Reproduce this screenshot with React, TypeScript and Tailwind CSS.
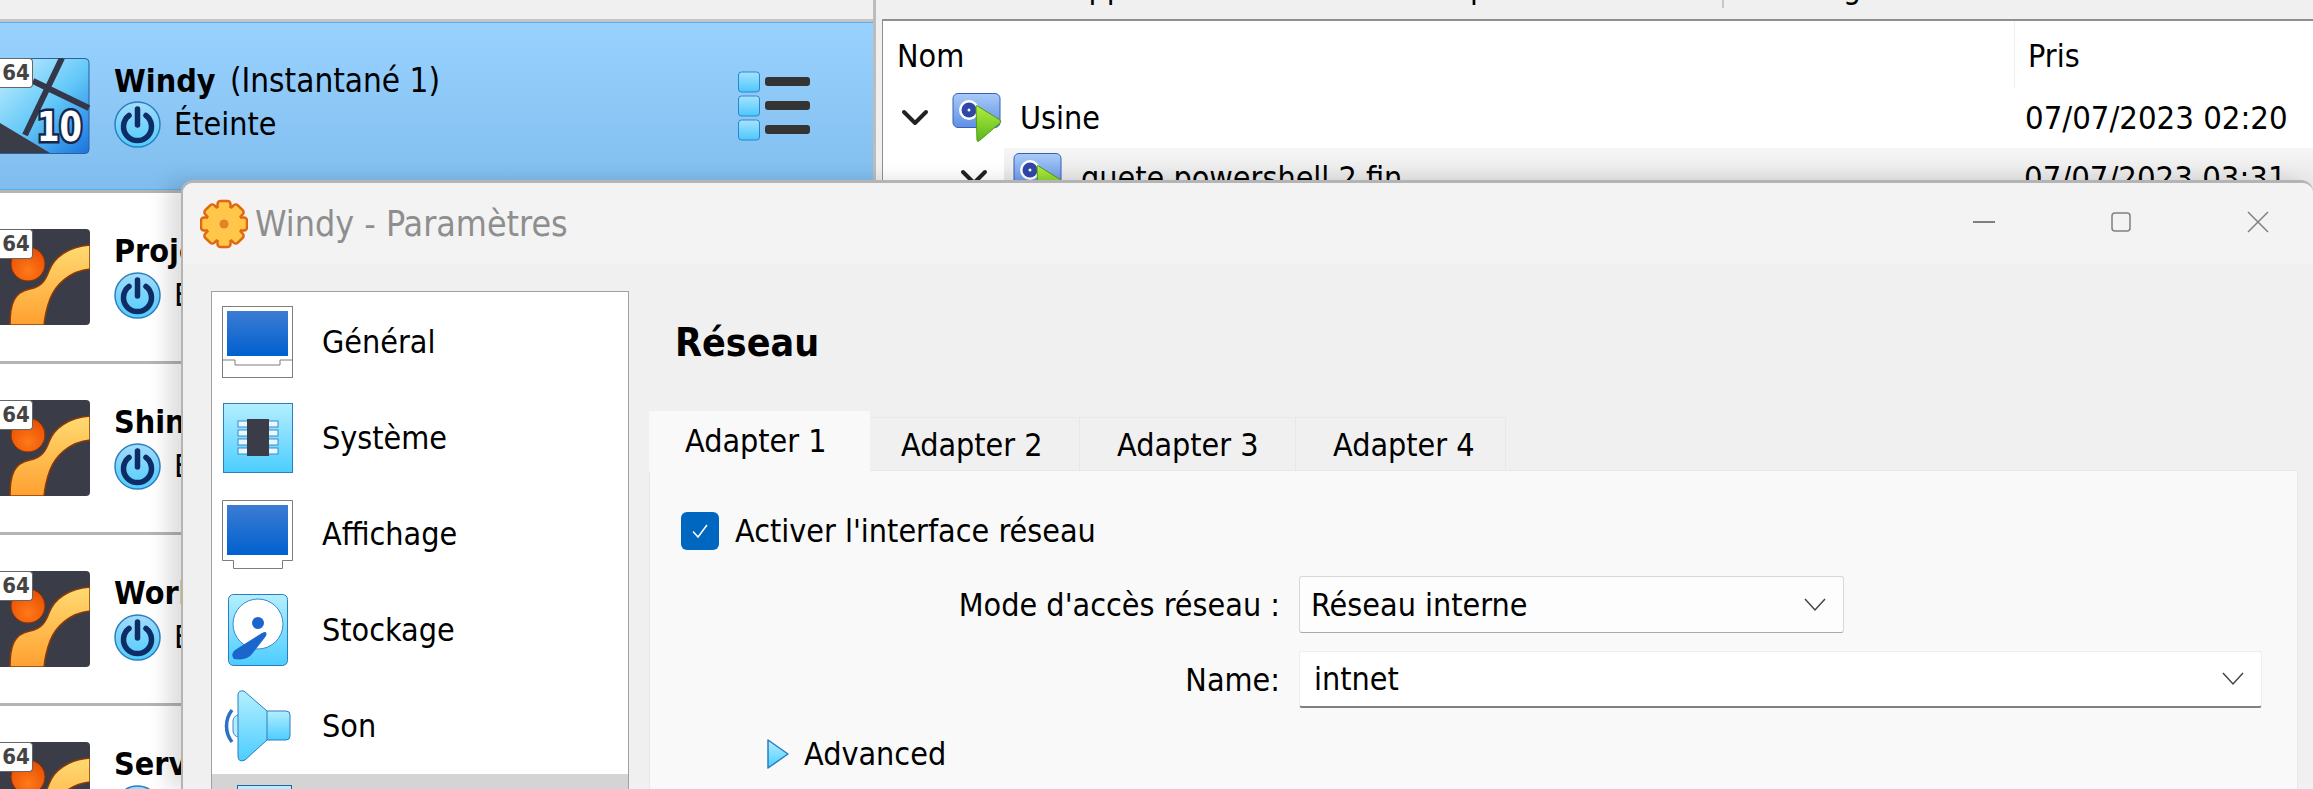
import type { ReactNode } from 'react';

function PowerIcon() {
  return (
    <svg width="47" height="47" viewBox="0 0 47 47" className="shrink-0">
      <defs>
        <linearGradient id="pw" x1="0" y1="0" x2="0" y2="1">
          <stop offset="0" stopColor="#a4dcfa" />
          <stop offset="1" stopColor="#4ecdfd" />
        </linearGradient>
      </defs>
      <circle cx="23.5" cy="23.5" r="22.5" fill="url(#pw)" stroke="#2c7fc0" strokeWidth="1.5" />
      <path d="M15 14.5a14 14 0 1 0 17 0" fill="none" stroke="#0e2d66" strokeWidth="5.5" strokeLinecap="round" />
      <path d="M23.5 8v16" fill="none" stroke="#0e2d66" strokeWidth="5.5" strokeLinecap="round" />
    </svg>
  );
}

function Badge64() {
  return (
    <span className="absolute left-0 top-0 flex h-[30px] w-[33px] items-center justify-center rounded-r-[4px] border border-l-0 border-[#666] bg-white text-[22px] font-bold leading-none text-[#444]">
      64
    </span>
  );
}

function Win10Icon() {
  return (
    <div className="relative h-[96px] w-[90px] shrink-0">
      <svg width="90" height="96" viewBox="0 0 90 96">
        <defs>
          <linearGradient id="w10" x1="0" y1="0" x2="1" y2="1">
            <stop offset="0" stopColor="#d4f4ff" />
            <stop offset="0.55" stopColor="#62c8f8" />
            <stop offset="1" stopColor="#1a73dd" />
          </linearGradient>
        </defs>
        <rect x="-10" y="0.5" width="99" height="95" rx="4" fill="url(#w10)" stroke="#2b5f9d" />
        <path d="M-10 59 L50 95 L-10 95 Z" fill="#3a3d47" />
        <path d="M62 0 L25 77 M33 23 L89 50" stroke="#34374a" strokeWidth="6" fill="none" />
        <text x="37" y="83" fontSize="40" fontWeight="700" textLength="45" lengthAdjust="spacingAndGlyphs" fill="#fff" stroke="#14264d" strokeWidth="5" paintOrder="stroke">
          10
        </text>
      </svg>
      <Badge64 />
    </div>
  );
}

function OrangeIcon() {
  return (
    <div className="relative h-[96px] w-[90px] shrink-0">
      <svg width="90" height="96" viewBox="0 0 90 96">
        <defs>
          <linearGradient id="ox" x1="0" y1="0" x2="0" y2="1">
            <stop offset="0" stopColor="#ffdb72" />
            <stop offset="1" stopColor="#ffa030" />
          </linearGradient>
          <radialGradient id="ob" cx="0.5" cy="0.7" r="0.7">
            <stop offset="0" stopColor="#ff7a1a" />
            <stop offset="1" stopColor="#e84d00" />
          </radialGradient>
        </defs>
        <rect x="-10" y="0" width="100" height="96" rx="4" fill="#3a3d47" />
        <circle cx="28" cy="35" r="17" fill="url(#ob)" stroke="#8c2c00" />
        <path d="M10 96 C10 75 14 63 30 60 C42 58 46 50 49 42 C54 28 68 18 90 16 L90 40 C70 42 56 55 50 70 C47 78 45 86 44 96 Z" fill="url(#ox)" stroke="#8a3a0a" strokeWidth="1.5" />
      </svg>
      <Badge64 />
    </div>
  );
}

function DetailsIcon() {
  return (
    <svg width="72" height="70" viewBox="0 0 72 70" className="shrink-0">
      <defs>
        <linearGradient id="dt" x1="0" y1="0" x2="0" y2="1">
          <stop offset="0" stopColor="#a6e3ff" />
          <stop offset="1" stopColor="#4cc7fb" />
        </linearGradient>
      </defs>
      {[1, 25, 49].map((y) => (
        <g key={y}>
          <rect x="0.5" y={y} width="21" height="20" rx="3" fill="url(#dt)" stroke="#2c85cc" />
          <rect x="27" y={y + 5} width="45" height="9" rx="3" fill="#343434" />
        </g>
      ))}
    </svg>
  );
}

function VmRow({ name, extra, selected, icon }: { name: string; extra?: string; selected?: boolean; icon: ReactNode }) {
  return (
    <div
      className={
        selected
          ? 'flex h-[168px] shrink-0 items-center border-y border-[#5aaee8] bg-gradient-to-b from-[#99d2ff] to-[#80bdee]'
          : 'flex h-[168px] shrink-0 items-center bg-white'
      }
    >
      {icon}
      <div className="ml-[24px] flex flex-col pb-[5px]">
        <div className="h-[41px] whitespace-nowrap leading-[41px]">
          <span className="font-bold">{name}</span>
          {extra && <span className="ml-[5px] text-[33px]"> {extra}</span>}
        </div>
        <div className="flex items-center gap-[13px]">
          <PowerIcon />
          <span>Éteinte</span>
        </div>
      </div>
      {selected && (
        <div className="ml-auto mr-[63px]">
          <DetailsIcon />
        </div>
      )}
    </div>
  );
}

function SnapshotIcon() {
  return (
    <svg width="50" height="50" viewBox="0 0 50 50" className="shrink-0">
      <defs>
        <linearGradient id="sn" x1="0" y1="0" x2="0" y2="1">
          <stop offset="0" stopColor="#a9cbf7" />
          <stop offset="1" stopColor="#5f8fe6" />
        </linearGradient>
        <linearGradient id="sg" x1="0" y1="0" x2="0" y2="1">
          <stop offset="0" stopColor="#b5ec3f" />
          <stop offset="1" stopColor="#58b71c" />
        </linearGradient>
      </defs>
      <rect x="1" y="0.5" width="47" height="34" rx="5" fill="url(#sn)" stroke="#3a5fb4" />
      <circle cx="17" cy="17" r="10" fill="#fff" />
      <circle cx="17" cy="17" r="7.5" fill="#3147a8" />
      <circle cx="17" cy="17" r="1.5" fill="#fff" />
      <path d="M24 14 Q23.5 12 25.5 13 L48 27 Q49.5 29 48 30 L27 48 Q25 49 25 47 Z" fill="url(#sg)" stroke="#4e9a16" />
    </svg>
  );
}

function TreeChevron() {
  return (
    <svg width="28" height="18" viewBox="0 0 28 18" className="shrink-0">
      <path d="M3 3 L14 14 L25 3" fill="none" stroke="#222" strokeWidth="4" strokeLinecap="round" strokeLinejoin="round" />
    </svg>
  );
}

function GearIcon() {
  const angles = [0, 45, 90, 135, 180, 225, 270, 315];
  return (
    <svg width="48" height="50" viewBox="0 0 48 50" className="shrink-0">
      <g transform="translate(24 25)">
        {angles.map((a) => (
          <rect key={a} x="-6.5" y="-23" width="13" height="14" rx="3" fill="#ffc64a" stroke="#dd6a12" strokeWidth="2.5" transform={`rotate(${a})`} />
        ))}
        <circle r="17" fill="#ffc64a" />
        <circle r="4.5" fill="#e08426" />
      </g>
    </svg>
  );
}

function ScreenDefs() {
  return (
    <defs>
      <linearGradient id="scr" x1="0" y1="0" x2="0" y2="1">
        <stop offset="0" stopColor="#3c7cd3" />
        <stop offset="1" stopColor="#0060cf" />
      </linearGradient>
      <linearGradient id="sky" x1="0" y1="0" x2="0" y2="1">
        <stop offset="0" stopColor="#b4efff" />
        <stop offset="1" stopColor="#4ccdff" />
      </linearGradient>
    </defs>
  );
}

function GeneralIcon() {
  return (
    <svg width="72" height="72" viewBox="0 0 72 72">
      <ScreenDefs />
      <rect x="0.5" y="0.5" width="70" height="71" fill="#fff" stroke="#7d7d7d" />
      <rect x="5" y="5" width="61" height="45" fill="url(#scr)" />
      <path d="M0 54 H13 V59 H58 V54 H71" fill="none" stroke="#7d7d7d" />
    </svg>
  );
}

function SystemIcon() {
  const pins = [19, 28, 37, 46];
  return (
    <svg width="72" height="72" viewBox="0 0 72 72">
      <rect x="1.5" y="1.5" width="69" height="69" fill="url(#sky)" stroke="#2c7cc2" />
      {pins.map((y) => (
        <g key={y}>
          <rect x="16" y={y} width="40" height="6" fill="#e8f8ff" stroke="#3a8ac8" />
        </g>
      ))}
      <rect x="25" y="17" width="22" height="37" fill="#3a3d47" />
    </svg>
  );
}

function DisplayIcon() {
  return (
    <svg width="72" height="69" viewBox="0 0 72 69">
      <path d="M0.5 0.5 H70.5 V60.5 H60.5 V68.5 H11.5 V60.5 H0.5 Z" fill="#fff" stroke="#7d7d7d" />
      <rect x="5" y="5" width="61" height="50" fill="url(#scr)" />
    </svg>
  );
}

function StorageIcon() {
  return (
    <svg width="72" height="72" viewBox="0 0 72 72">
      <rect x="6.5" y="0.5" width="59" height="71" rx="5" fill="url(#sky)" stroke="#2c7cc2" />
      <circle cx="36" cy="30" r="25" fill="#fff" stroke="#3a8ac8" />
      <circle cx="36" cy="29" r="6" fill="#1a66cc" />
      <path d="M12 65 Q8 60 13 56 L40 39 Q46 36 44 42 L30 60 Q25 67 12 65 Z" fill="#1a66cc" />
    </svg>
  );
}

function SoundIcon() {
  return (
    <svg width="72" height="72" viewBox="0 0 72 72">
      <path d="M10 20 A26 26 0 0 0 10 52" fill="none" stroke="#2f6fc4" strokeWidth="3.5" />
      <rect x="11" y="25" width="14" height="22" rx="6" fill="#b7ecff" stroke="#3a8ac8" />
      <rect x="40" y="21" width="28" height="29" rx="4" fill="url(#sky)" stroke="#2c7cc2" />
      <path d="M16 5 Q16 0 22 1 L45 21 V50 L23 70 Q16 73 16 66 Z" fill="url(#sky)" stroke="#2c7cc2" />
    </svg>
  );
}

function NetworkIcon() {
  return (
    <svg width="72" height="72" viewBox="0 0 72 72">
      <rect x="16.5" y="0.5" width="54" height="60" fill="url(#sky)" stroke="#2c5f9c" />
    </svg>
  );
}

function SideItem({ label, icon, selected }: { label: string; icon: ReactNode; selected?: boolean }) {
  return (
    <div className={selected ? 'flex h-[96px] shrink-0 items-start bg-[#d4d4d4] pl-[9px] pt-[11px]' : 'flex h-[96px] shrink-0 items-center pl-[10px]'}>
      <div className="flex w-[72px] shrink-0 justify-center">{icon}</div>
      <span className="ml-[28px]">{label}</span>
    </div>
  );
}

function Combo({ value, className }: { value: string; className: string }) {
  return (
    <div className={`flex h-[57px] items-center justify-between rounded-[3px] pr-[17px] ${className}`}>
      <span>{value}</span>
      <svg width="22" height="14" viewBox="0 0 22 14">
        <path d="M1 1 L11 12 L21 1" fill="none" stroke="#444" strokeWidth="1.5" />
      </svg>
    </div>
  );
}

function Tab({ label, className }: { label: string; className: string }) {
  return (
    <div className={`flex h-[53px] items-center border-r border-t border-[#e8e8e8] bg-[#f0f0f0] pt-[2px] ${className}`}>
      {label}
    </div>
  );
}

export default function App() {
  return (
    <div className="relative h-[789px] w-[2313px] overflow-hidden bg-[#f0f0f0] text-[32px] leading-[42px] text-black [font-family:'DejaVu_Sans_Condensed','DejaVu_Sans',sans-serif]">
      <div className="flex h-full">
        {/* machine list */}
        <div className="flex w-[873px] shrink-0 flex-col overflow-hidden">
          <div className="h-[19px] shrink-0 bg-[#f0f0f0]" />
          <div className="h-[3px] shrink-0 bg-[#c4c4c4]" />
          <VmRow name="Windy" extra="(Instantané 1)" selected icon={<Win10Icon />} />
          <div className="h-[3px] shrink-0 bg-[#b4b4b4]" />
          <VmRow name="Projet" icon={<OrangeIcon />} />
          <div className="h-[3px] shrink-0 bg-[#b4b4b4]" />
          <VmRow name="Shinken" icon={<OrangeIcon />} />
          <div className="h-[3px] shrink-0 bg-[#b4b4b4]" />
          <VmRow name="Work" icon={<OrangeIcon />} />
          <div className="h-[3px] shrink-0 bg-[#b4b4b4]" />
          <VmRow name="Server" icon={<OrangeIcon />} />
        </div>
        <div className="w-[3px] shrink-0 bg-[#bcbcbc]" />

        {/* snapshots */}
        <div className="flex min-w-0 flex-1 flex-col">
          <div className="flex h-[19px] shrink-0 items-end overflow-hidden pb-[16px] pl-[176px] leading-none">
            <span className="shrink-0">Supprimer</span>
            <span className="ml-[222px] shrink-0">Propriétés</span>
            <div className="ml-[152px] h-[8px] w-[2px] shrink-0 self-start bg-[#c8c8c8]" />
            <span className="ml-[45px] shrink-0">Configuration</span>
          </div>
          <div className="ml-[6px] flex-1 border-l border-t-2 border-[#8f8f8f] bg-white">
            <div className="flex h-[67px]">
              <div className="flex w-[1132px] items-center border-r border-[#eeeeee] pl-[14px] pt-[3px]">Nom</div>
              <div className="flex items-center pl-[13px] pt-[3px]">Pris</div>
            </div>
            <div className="flex h-[60px] items-center">
              <div className="flex w-[1132px] items-center pl-[18px]">
                <TreeChevron />
                <div className="ml-[23px]">
                  <SnapshotIcon />
                </div>
                <span className="ml-[18px]">Usine</span>
              </div>
              <span className="whitespace-nowrap pl-[10px] text-[32.6px]">07/07/2023 02:20</span>
            </div>
            <div className="flex h-[60px] items-center pl-[77px]">
              <TreeChevron />
              <div className="ml-[16px] flex h-full flex-1 items-center bg-gradient-to-b from-[#f6f6f6] to-[#dddddd]">
                <div className="ml-[9px]">
                  <SnapshotIcon />
                </div>
                <span className="ml-[18px] w-[943px] whitespace-nowrap">quete powershell 2 fin</span>
                <span className="whitespace-nowrap text-[32.6px]">07/07/2023 03:31</span>
              </div>
            </div>
          </div>
        </div>
      </div>

      {/* settings window */}
      <div className="absolute bottom-0 left-[181px] right-0 top-[180px] flex flex-col rounded-t-[12px] border-l-2 border-t-[3px] border-[#b4b4b4] bg-[#f0f0f0] shadow-[-14px_0_20px_rgba(0,0,0,0.13)]">
        <div className="flex h-[81px] shrink-0 items-center rounded-t-[10px] bg-[#f3f3f3] pl-[17px]">
          <GearIcon />
          <span className="ml-[7px] text-[35.5px] text-[#8e8e8e]">Windy - Paramètres</span>
          <div className="ml-auto flex items-center gap-[115px] pb-[3px] pr-[44px]">
            <svg width="22" height="22" viewBox="0 0 22 22">
              <path d="M0 11 H22" stroke="#808080" strokeWidth="2" />
            </svg>
            <svg width="22" height="22" viewBox="0 0 22 22">
              <rect x="2" y="2" width="18" height="18" rx="3" fill="none" stroke="#808080" strokeWidth="1.5" />
            </svg>
            <svg width="22" height="22" viewBox="0 0 22 22">
              <path d="M1 1 L21 21 M21 1 L1 21" stroke="#808080" strokeWidth="1.5" />
            </svg>
          </div>
        </div>

        <div className="flex min-h-0 flex-1">
          <div className="ml-[28px] mt-[27px] flex w-[418px] shrink-0 flex-col border border-b-0 border-[#a0a0a0] bg-white pt-[2px]">
            <SideItem label="Général" icon={<GeneralIcon />} />
            <SideItem label="Système" icon={<SystemIcon />} />
            <SideItem label="Affichage" icon={<DisplayIcon />} />
            <SideItem label="Stockage" icon={<StorageIcon />} />
            <SideItem label="Son" icon={<SoundIcon />} />
            <SideItem label="Réseau" icon={<NetworkIcon />} selected />
          </div>

          <div className="ml-[20px] flex min-w-0 flex-1 flex-col pr-[15px]">
            <div className="h-[147px] shrink-0 pl-[26px] pt-[58px] text-[39px] font-bold">Réseau</div>
            <div className="flex h-[59px] shrink-0 items-end">
              <div className="relative z-10 -mb-[2px] flex h-[61px] w-[221px] items-center bg-[#f9f9f9] pb-[1px] pl-[36px]">
                Adapter 1
              </div>
              <Tab label="Adapter 2" className="w-[210px] pl-[31px]" />
              <Tab label="Adapter 3" className="w-[216px] pl-[37px]" />
              <Tab label="Adapter 4" className="w-[210px] pl-[37px]" />
            </div>
            <div className="flex-1 border border-b-0 border-[#e8e8e8] bg-[#f9f9f9]">
              <div className="flex items-center pl-[31px] pt-[38px]">
                <div className="flex h-[38px] w-[38px] items-center justify-center rounded-[6px] bg-[#0067c0]">
                  <svg width="22" height="22" viewBox="0 0 22 22">
                    <path d="M4 11.5 L9 17 L18 5" fill="none" stroke="#fff" strokeWidth="1.5" />
                  </svg>
                </div>
                <span className="ml-[16px] pt-[1px]">Activer l'interface réseau</span>
              </div>
              <div className="mt-[24px] grid grid-cols-[630px_1fr] items-center gap-x-[19px] gap-y-[18px]">
                <span className="justify-self-end">Mode d'accès réseau :</span>
                <Combo value="Réseau interne" className="w-[545px] border border-[#d8d8d8] border-b-[#aaaaaa] bg-[#fdfdfd] pl-[11px]" />
                <span className="justify-self-end">Name:</span>
                <Combo value="intnet" className="w-[963px] border border-[#eeeeee] border-b-2 border-b-[#808080] bg-white pl-[14px]" />
              </div>
              <div className="mt-[25px] flex items-center pl-[117px]">
                <svg width="22" height="30" viewBox="0 0 22 30">
                  <defs>
                    <linearGradient id="adv" x1="0" y1="0" x2="0" y2="1">
                      <stop offset="0" stopColor="#b4efff" />
                      <stop offset="1" stopColor="#4ccdff" />
                    </linearGradient>
                  </defs>
                  <path d="M1 1 L21 15 L1 29 Z" fill="url(#adv)" stroke="#2c7cc2" strokeWidth="1.5" strokeLinejoin="round" />
                </svg>
                <span className="ml-[15px]">Advanced</span>
              </div>
            </div>
          </div>
        </div>
      </div>
    </div>
  );
}
